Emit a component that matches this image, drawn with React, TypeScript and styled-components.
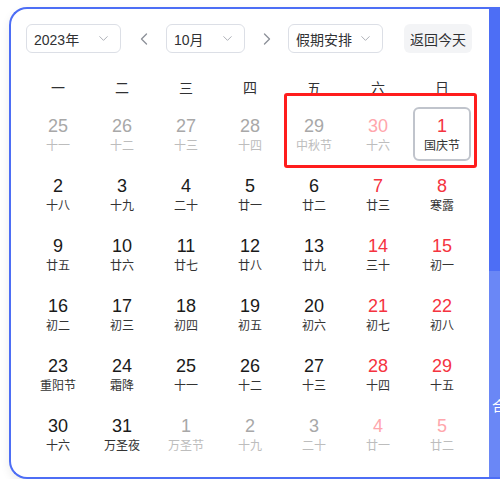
import { createGlobalStyle } from 'styled-components';
import styled from 'styled-components';
import { ChevronDown, ChevronLeft, ChevronRight } from 'lucide-react';

const GlobalStyle = createGlobalStyle`
  html, body {
    margin: 0;
    padding: 0;
    overflow: hidden;
    background: #ffffff;
    font-family: "Liberation Sans", "Noto Sans CJK SC", sans-serif;
  }
`;

const Page = styled.div`
  padding: 7px 0 0 9px;
  width: 800px;
`;

const Card = styled.section`
  position: relative;
  display: flex;
  width: 700px;
  height: 472px;
  box-sizing: border-box;
  border: 2px solid #4d6ef5;
  border-right: none;
  border-radius: 18px 0 0 18px;
  box-shadow: 0 4px 10px rgba(0, 0, 0, 0.08);
  background: #ffffff;
`;

const Main = styled.div`
  width: 478px;
  flex-shrink: 0;
  padding: 15px 0 0 15px;
  box-sizing: border-box;
`;

const Toolbar = styled.div`
  display: flex;
  align-items: center;
  height: 29px;
`;

const Select = styled.div<{ $width: number }>`
  display: flex;
  align-items: center;
  justify-content: space-between;
  width: ${({ $width }) => $width}px;
  height: 29px;
  box-sizing: border-box;
  padding: 0 9px 0 7px;
  border: 1px solid #dcdfe6;
  border-radius: 6px;
  font-size: 14px;
  color: #303133;
  font-family: "Liberation Sans", "Noto Sans CJK SC", sans-serif;

  svg {
    color: #a8abb2;
  }
`;

const Arrow = styled.div<{ $width: number }>`
  display: flex;
  align-items: center;
  justify-content: center;
  width: ${({ $width }) => $width}px;
  color: #8d9199;
`;

const TodayButton = styled.button`
  margin-left: 21px;
  width: 68px;
  height: 29px;
  padding: 0;
  border: none;
  border-radius: 6px;
  background: #f3f4f6;
  color: #303133;
  font-size: 14px;
  font-family: "Liberation Sans", "Noto Sans CJK SC", sans-serif;
`;

const Grid = styled.div`
  display: grid;
  grid-template-columns: repeat(7, 64px);
  margin-top: 16px;
`;

const WeekLabel = styled.div`
  height: 35px;
  display: flex;
  align-items: center;
  justify-content: center;
  font-size: 14px;
  color: #303133;
`;

const Cell = styled.div<{ $selected?: boolean }>`
  margin: 3px;
  height: 54px;
  box-sizing: border-box;
  display: flex;
  flex-direction: column;
  align-items: center;
  justify-content: center;
  border: 2px solid ${({ $selected }) => ($selected ? '#c0c4cc' : 'transparent')};
  border-radius: 6px;
`;

const Day = styled.span<{ $tone: Tone; $weekend: boolean }>`
  font-size: 18px;
  line-height: 22px;
  color: ${({ $tone, $weekend }) =>
    $tone === 'other' ? ($weekend ? '#ffa6ac' : '#a8a8a8') : $weekend ? '#f5333f' : '#1a1a1a'};
`;

const Lunar = styled.span<{ $tone: Tone }>`
  font-size: 12px;
  line-height: 16px;
  color: ${({ $tone }) => ($tone === 'other' ? '#bdbdbd' : '#333333')};
  font-family: "Noto Sans CJK SC", sans-serif;
`;

const Highlight = styled.div`
  position: absolute;
  left: 273px;
  top: 84px;
  width: 193px;
  height: 75px;
  box-sizing: border-box;
  border: 3px solid #ff1d1d;
  border-radius: 3px;
  pointer-events: none;
`;

const Side = styled.aside`
  flex: 1;
  display: flex;
  flex-direction: column;
`;

const SideTop = styled.div`
  height: 264px;
  margin-top: -2px;
  background: #4d6ef5;
`;

const SideBody = styled.div`
  flex: 1;
  background: #6a87f6;
  color: #ffffff;
  font-size: 14px;
  padding: 124px 0 0 3px;
  font-family: "Noto Sans CJK SC", sans-serif;
`;

type Tone = 'cur' | 'other';

const WEEK = ['一', '二', '三', '四', '五', '六', '日'];

const rows: [number, string, Tone][][] = [
  [[25, '十一', 'other'], [26, '十二', 'other'], [27, '十三', 'other'], [28, '十四', 'other'], [29, '中秋节', 'other'], [30, '十六', 'other'], [1, '国庆节', 'cur']],
  [[2, '十八', 'cur'], [3, '十九', 'cur'], [4, '二十', 'cur'], [5, '廿一', 'cur'], [6, '廿二', 'cur'], [7, '廿三', 'cur'], [8, '寒露', 'cur']],
  [[9, '廿五', 'cur'], [10, '廿六', 'cur'], [11, '廿七', 'cur'], [12, '廿八', 'cur'], [13, '廿九', 'cur'], [14, '三十', 'cur'], [15, '初一', 'cur']],
  [[16, '初二', 'cur'], [17, '初三', 'cur'], [18, '初四', 'cur'], [19, '初五', 'cur'], [20, '初六', 'cur'], [21, '初七', 'cur'], [22, '初八', 'cur']],
  [[23, '重阳节', 'cur'], [24, '霜降', 'cur'], [25, '十一', 'cur'], [26, '十二', 'cur'], [27, '十三', 'cur'], [28, '十四', 'cur'], [29, '十五', 'cur']],
  [[30, '十六', 'cur'], [31, '万圣夜', 'cur'], [1, '万圣节', 'other'], [2, '十九', 'other'], [3, '二十', 'other'], [4, '廿一', 'other'], [5, '廿二', 'other']],
];

export default function App() {
  return (
    <Page>
      <GlobalStyle />
      <Card>
        <Main>
          <Toolbar>
            <Select $width={95}>
              2023年
              <ChevronDown size={15} strokeWidth={1.5} />
            </Select>
            <Arrow $width={45}>
              <ChevronLeft size={20} strokeWidth={1.6} />
            </Arrow>
            <Select $width={79}>
              10月
              <ChevronDown size={15} strokeWidth={1.5} />
            </Select>
            <Arrow $width={43}>
              <ChevronRight size={20} strokeWidth={1.6} />
            </Arrow>
            <Select $width={95}>
              假期安排
              <ChevronDown size={15} strokeWidth={1.5} />
            </Select>
            <TodayButton>返回今天</TodayButton>
          </Toolbar>
          <Grid>
            {WEEK.map((w) => (
              <WeekLabel key={w}>{w}</WeekLabel>
            ))}
            {rows.flatMap((row, r) =>
              row.map(([day, lunar, tone], c) => {
                const selected = r === 0 && c === 6;
                return (
                  <Cell key={`${r}-${c}`} $selected={selected}>
                    <Day $tone={tone} $weekend={c >= 5}>
                      {day}
                    </Day>
                    <Lunar $tone={tone}>{lunar}</Lunar>
                  </Cell>
                );
              }),
            )}
          </Grid>
        </Main>
        <Side>
          <SideTop />
          <SideBody>合</SideBody>
        </Side>
        <Highlight />
      </Card>
    </Page>
  );
}
